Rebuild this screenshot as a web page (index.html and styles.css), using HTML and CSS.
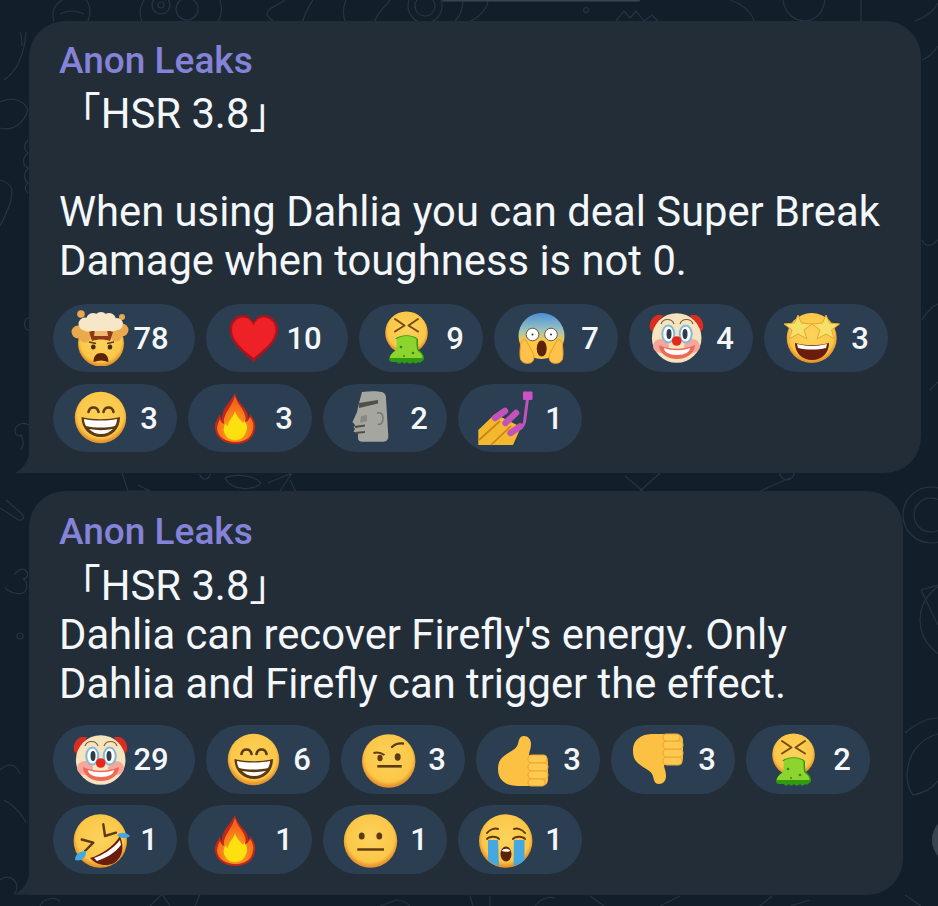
FILE: index.html
```html
<!DOCTYPE html>
<html lang="en">
<head>
    <meta charset="UTF-8">
    <meta name="viewport" content="width=device-width, initial-scale=1.0">
    <title>Anon Leaks</title>
    <link rel="stylesheet" href="styles.css">
</head>
<body>
    <!-- emoji set, every symbol is drawn at 1 unit = 1px in a 60x56 box -->
    <svg class="defs" width="0" height="0">
        <defs>
            <radialGradient id="face" cx="50%" cy="45%" r="52%">
                <stop offset="0" stop-color="#fcd35c"/>
                <stop offset="0.85" stop-color="#fbc748"/>
                <stop offset="1" stop-color="#e8962c"/>
            </radialGradient>
            <linearGradient id="scream" x1="0" y1="0" x2="0" y2="1">
                <stop offset="0" stop-color="#4a90d6"/>
                <stop offset="0.38" stop-color="#9cc4c0"/>
                <stop offset="0.62" stop-color="#fcc843"/>
            </linearGradient>
            <radialGradient id="flame" cx="50%" cy="75%" r="60%">
                <stop offset="0" stop-color="#ffb21c"/>
                <stop offset="1" stop-color="#f4641a"/>
            </radialGradient>

            <symbol id="e-grin" viewBox="0 0 60 56">
                <circle cx="29.5" cy="27.5" r="25.7" fill="url(#face)"/>
                <path d="M17.5 22c1-6 9-6 10 0M32.5 22c1-6 9-6 10 0" fill="none" stroke="#5d3a12" stroke-width="2.6" stroke-linecap="round"/>
                <path d="M10.5 27c12 3 26 3 38.500 0 0 12-8 20-19 20s-19.500-8-19.500-20z" fill="#5d3a12"/>
                <path d="M13 29c10 2 23 2 33 0 0 3-1 5-2 7-9 2-20 2-29 0-1-2-2-4-2-7z" fill="#fff"/>
                <path d="M18 39c8 1.500 16 1.500 24 0-3 3-7 5-12 5s-9-2-12-5z" fill="#fff"/>
            </symbol>
            <symbol id="e-fire" viewBox="0 0 60 56">
                <path d="M29 3c2 9 9 13 12 19 1 2 1 4 1 6 1-1 2-2 2-4 4 5 6 10 5 15-1 9-9 15-19.500 15S10 48 9 39c-1-7 3-10 5-15 0 2 1 4 2 5-1-10 8-16 13-26z" fill="#c4261a"/>
                <path d="M29 6c2 8 8 12 10 19 1 3 1 6-1 8 3-1 5-3 6-6 3 4 4 8 3 12-1 8-8 13-17.500 13S12 47 11 39c0-4 2-8 3-10 1 3 2 4 4 5-2-9 8-17 11-28z" fill="url(#flame)"/>
                <path d="M29 21c1 5 5 8 8 12 1-1 1-2 1-3 3 4 4 8 2 12-2 5-5 8-11 8s-9-3-11-8c-1-3 0-7 2-9 0 2 1 3 2 3 0-6 6-9 7-15z" fill="#fde010"/>
            </symbol>
            <symbol id="e-heart" viewBox="0 0 60 56">
                <path d="M29.500 52C17 41 5.500 32 5.500 19.500 5.500 11 11.500 5 19 5c5 0 8 3 10.500 7 2.500-4 5.500-7 10.500-7 7.500 0 14 6 14 14.500C54 32 42 41 29.500 52z" fill="#a91420"/>
                <path d="M29.500 48C18 38.500 8 31 8 19.500 8 12.500 13 7.500 19 7.500c5 0 8.500 3 10.500 8 2-5 5.500-8 10.500-8 6 0 11.500 5 11.500 12C51.500 31 41 38.500 29.500 48z" fill="#ee2226"/>
            </symbol>
            <symbol id="e-vomit" viewBox="0 0 60 56">
                <circle cx="29.500" cy="22.700" r="21.300" fill="url(#face)"/>
                <path d="M18 9l9.500 6.500-9.500 6M41 9l-9.500 6.500 9.500 6" fill="none" stroke="#7a4a14" stroke-width="2" stroke-linecap="round" stroke-linejoin="round"/>
                <path d="M18 29c5-5 18-5 23 0 0 5 0 9 1 11 3 2 5 5 5 8 0 2-1 3-2 3-1 2-3 2-4 1-2 2-3 2-5 0-2 2-4 2-6 0-2 2-3 2-5 0-2 2-4 2-5 0-2 0-8 1-8-3 0-3 4-7 7-9 2-3 2-6 1-11z" fill="#2f9a12"/>
                <path d="M19.500 29c5-4 15-4 20 0 0 5 0 10 1.500 12 3 2 4.500 4 4.500 7H13c0-3 2-5 5-7 1.500-2 2-7 1.500-12z" fill="#8ed42f"/>
                <circle cx="24" cy="37" r="1.300" fill="#2d8a12"/><circle cx="36" cy="43" r="1.300" fill="#2d8a12"/><circle cx="27" cy="46" r="1" fill="#2d8a12"/>
            </symbol>
            <symbol id="e-scream" viewBox="0 0 60 56">
                <circle cx="29.500" cy="26" r="23" fill="url(#scream)"/>
                <circle cx="20.500" cy="24.500" r="6.300" fill="#fff" stroke="#6b5a42"/><circle cx="39" cy="24.500" r="6.300" fill="#fff" stroke="#6b5a42"/>
                <circle cx="20.500" cy="24.500" r="1" fill="#333"/><circle cx="39" cy="24.500" r="1" fill="#333"/>
                <ellipse cx="29.700" cy="38.500" rx="5" ry="8" fill="#5b2208"/>
                <path d="M9 32c1-3 5-3 6 0l6 11c2 4 1 9-3 10-4 1-8 0-9.500-4-1-4-.5-11 .5-17zM50 32c-1-3-5-3-6 0l-6 11c-2 4-1 9 3 10 4 1 8 0 9.500-4 1-4 .5-11-.5-17z" fill="#fcc24a" stroke="#eb9b2f"/>
            </symbol>
            <symbol id="e-clown" viewBox="0 0 60 56">
                <path d="M10 5C4 8 2 13 3 19l5 6 8-20zM49 5c6 3 8 8 7 14l-5 6-8-20z" fill="#d92d20"/>
                <circle cx="29.700" cy="28" r="24.800" fill="#f6e4bf"/>
                <ellipse cx="14" cy="36" rx="8" ry="7" fill="#f6a79a"/><ellipse cx="45" cy="36" rx="8" ry="7" fill="#f6a79a"/>
                <path d="M14 14c2-6 11-6 13 0M33 14c2-6 11-6 13 0" fill="none" stroke="#7a5c3a" stroke-width="1.200"/>
                <ellipse cx="21.300" cy="24" rx="6" ry="8.500" fill="#fff" stroke="#84b8dc" stroke-width="2"/><ellipse cx="38.700" cy="24" rx="6" ry="8.500" fill="#fff" stroke="#84b8dc" stroke-width="2"/>
                <ellipse cx="22" cy="24" rx="2.500" ry="5" fill="#2c3c4a"/><ellipse cx="38" cy="24" rx="2.500" ry="5" fill="#2c3c4a"/>
                <path d="M12 35c11 5 24 5 36 0 0 8-8 14-18 14s-18-6-18-14z" fill="#ee6a58"/>
                <path d="M17 38c8 3 18 3 26 0 0 4-5 7-13 7s-13-3-13-7z" fill="#fff"/>
                <circle cx="29.700" cy="31" r="4.800" fill="#e8261c"/>
            </symbol>
            <symbol id="e-star" viewBox="0 0 60 56">
                <circle cx="29.700" cy="28" r="25" fill="url(#face)"/>
                <path d="M16 5l3.500 8 10.500 1-8 6 3 9-9-5-9 5 3-9-8-6 10.500-1zM44 5l3.500 8 10 1-8 6 3 9-8.500-5-9 5 3-9-8-6 10.500-1z" fill="#f6e06a" stroke="#e7a72e"/>
                <path d="M13 33c11 3 23 3 34 0 0 10-7 17-17 17s-17-7-17-17z" fill="#6a1c0d"/>
                <path d="M15 34c10 2.500 20 2.500 30 0l-1 4c-9 2-19 2-28 0z" fill="#fff"/>
            </symbol>
            <symbol id="e-moai" viewBox="0 0 60 56">
                <path d="M21 2c8-1 15-1 20 0 3 1 4 3 4 6l2.300 38c0 4-2 5.700-5 5.700H22c-3 0-5-1-5-4v-5l-4.500-1 1.500-3-1.500-1.500L14 35l-2.500-3L16 22l2-9z" fill="#a6a6a1"/>
                <path d="M18 13l19-3v3.500L18 18zM13 36l11-1.500v2L14.500 38zM14 42l10-1v2l-10 1z" fill="#4f4f4a"/>
                <path d="M20 26l6-1v6l-7 2z" fill="#8a8a85"/>
                <path d="M36 23c4-1 6 1 6 5 0 5-2 7-5 6" fill="none" stroke="#777772" stroke-width="1.500"/>
            </symbol>
            <symbol id="e-nail" viewBox="0 0 60 56">
                <path d="M2.300 55V40L19 24l26 13-8 18z" fill="#f3b82d"/>
                <path d="M3 50l21-19M15 55l20-19" stroke="#c9841a" stroke-width="1.700"/>
                <path d="M19 28l10-7M29.500 33l10.500-10M34.500 43l9.500-6.500" fill="none" stroke="#c452bd" stroke-width="6.500" stroke-linecap="round"/>
                <path d="M43 37c2-1 3-2 4-5l3-23h3L50 32c-1 4-3 6-5.500 8z" fill="#c452bd"/>
                <rect x="47" y="1.500" width="9.500" height="8.500" rx="1" fill="#ca52c6"/>
            </symbol>
            <symbol id="e-raised" viewBox="0 0 60 56">
                <circle cx="29.700" cy="29" r="26.700" fill="url(#face)"/>
                <path d="M14.500 21c4-1 8 0 11 2" fill="none" stroke="#5d3a12" stroke-width="2"/>
                <path d="M33 15c3-3 7-4 11-3.500" fill="none" stroke="#5d3a12" stroke-width="2.400" stroke-linecap="round"/>
                <ellipse cx="21" cy="26" rx="2.600" ry="3.200" fill="#5d3a12"/><ellipse cx="38.700" cy="25" rx="3" ry="3.800" fill="#5d3a12"/>
                <rect x="18.300" y="33" width="24.400" height="2.600" fill="#5d3a12"/>
            </symbol>
            <symbol id="e-up" viewBox="0 0 60 56">
                <path d="M30 4c4 0 7 3 7 8 0 5-2 8-2 11h14c3 0 5 3 5 8v16c0 5-3 7-7 7H24c-10 0-20-4-20-17 0-6 2-10 6-13 6-5 12-6 14-12 1-5 2-8 6-8z" fill="#fcc043"/>
                <g fill="#fdc94f" stroke="#f0a535" stroke-width="1.100">
                    <rect x="34" y="23" width="19" height="8" rx="4"/>
                    <rect x="34" y="31" width="20" height="8" rx="4"/>
                    <rect x="34" y="39" width="20" height="8" rx="4"/>
                    <rect x="34" y="47" width="17" height="7" rx="3.500"/>
                </g>
            </symbol>
            <symbol id="e-neutral" viewBox="0 0 60 56">
                <circle cx="29.500" cy="29" r="26.700" fill="url(#face)"/>
                <ellipse cx="20.700" cy="24" rx="2.900" ry="3.600" fill="#5d3a12"/><ellipse cx="38.300" cy="24" rx="2.900" ry="3.600" fill="#5d3a12"/>
                <rect x="16.300" y="36.300" width="26.700" height="2.400" fill="#5d3a12"/>
            </symbol>
            <symbol id="e-sob" viewBox="0 0 60 56">
                <circle cx="29.700" cy="29" r="26.700" fill="url(#face)"/>
                <path d="M11 21c3-4 8-5 11-4M49 21c-3-4-8-5-11-4M11 27c2-3 10-3 12 0M37 27c2-3 10-3 12 0" fill="none" stroke="#5d3a12" stroke-width="2" stroke-linecap="round"/>
                <path d="M12 28h10l1 26c-4-1-8-3-11-6zM38 28h10.500v20c-3 3-6 5-11 6z" fill="#46a8e2"/>
                <ellipse cx="30" cy="42" rx="5.500" ry="7.500" fill="#5b2208"/>
                <path d="M25.500 39c2-3 7-3 9 0-3 1-6 1-9 0z" fill="#fff"/>
            </symbol>
            <symbol id="e-rofl" viewBox="0 0 60 56">
                <circle cx="29.300" cy="29" r="26.700" fill="url(#face)"/>
                <path d="M10.700 27.500l11.600 3.200-8.300 8.300M32.300 12.300L34 24l11-3.300" fill="none" stroke="#5d3a12" stroke-width="2.400" stroke-linecap="round" stroke-linejoin="round"/>
                <path d="M19 46c11-3 23-11 30-22 5 12 2 22-6 27-8 4-18 2-24-5z" fill="#6a1c0d"/>
                <path d="M23 46c9-3 19-9 26-18l1 5c-6 8-15 13-24 16z" fill="#fff"/>
                <path d="M59 24c-3 3-9 3-13-1 3-3 9-3 13 1zM4 48c0-5 4-9 11-9 1 6-5 11-11 9z" fill="#46a8e2"/>
            </symbol>
            <symbol id="e-head" viewBox="0 0 60 56">
                <circle cx="30" cy="33.500" r="23" fill="url(#face)"/>
                <!-- orange puffs behind the cloud -->
                <g fill="#eba94e">
                    <circle cx="7" cy="22" r="6.500"/><circle cx="14" cy="27" r="5.500"/>
                    <circle cx="51" cy="20" r="6.500"/><circle cx="45" cy="26" r="5.500"/>
                    <circle cx="10" cy="4" r="3.800"/><circle cx="51" cy="7" r="3"/>
                </g>
                <path d="M18 22c7-3 17-3 24 0l-3 9c-5-2-13-2-18 0z" fill="#8e3a18"/>
                <path d="M24 19h12l1 7H23z" fill="#f2b86e"/>
                <!-- cream cloud -->
                <g fill="#f8e7c6">
                    <circle cx="14" cy="14" r="6.500"/><circle cx="22" cy="10" r="7"/><circle cx="30" cy="9" r="7"/>
                    <circle cx="38" cy="10" r="7"/><circle cx="46" cy="14" r="6"/><rect x="13" y="12" width="34" height="9" rx="4"/>
                </g>
                <ellipse cx="22.300" cy="37" rx="2.300" ry="2.600" fill="#4a2a0c"/><ellipse cx="39" cy="37" rx="2.300" ry="2.600" fill="#4a2a0c"/>
                <path d="M18 32l7 1.500M43 32l-7 1.500" stroke="#5d3a12" stroke-width="1.500"/>
                <path d="M22.500 52c0-6 3-9 7.500-9s7.500 3 7.500 9c-5-2-10-2-15 0z" fill="#5b2208"/>
            </symbol>
        </defs>
    </svg>

    <!-- wallpaper doodles -->
    <svg class="wallpaper" width="938" height="906" viewBox="0 0 938 906">
        <g fill="none" stroke="#283443" stroke-width="1.200">
            <!-- top strip -->
            <path d="M54 21c-3-8 0-16 8-21M88 21c3-8 2-16-2-21M60 14c8-4 16-4 24 0"/>
            <circle cx="161" cy="5" r="9"/><circle cx="161" cy="5" r="3"/><circle cx="187" cy="9" r="11"/>
            <path d="M142 21c-3-6-2-14 2-21M218 21c4-6 4-14 2-21"/>
            <path d="M285 0c-8 6-18 8-18 14 0 3 4 5 6 7M313 0c-3 5-8 12-10 21"/>
            <path d="M345 21c-3-8-2-14 1-21M375 21c3-10 12-16 15-21"/>
            <circle cx="425" cy="6" r="17"/><circle cx="425" cy="6" r="10"/>
            <path d="M455 21c5-5 8-12 8-21M470 21c12-5 18-15 18-21"/>
            <circle cx="586" cy="10" r="2.500"/>
            <path d="M616 21l8-10 6 7 6-7 8 10 8-6 6 6"/>
            <path d="M730 0c12 4 22 12 24 21M783 0c2 14 12 21 22 21s18-8 20-21M861 0v21M915 21c12-4 20-12 23-18"/>
            <!-- left strip -->
            <path d="M4 80c12-8 20-22 22-48M20 32c2 4 2 8 2 14M0 128c14 4 24-6 28-18-4-10-16-14-28-8"/>
            <path d="M28 140c-5 5-4 10 0 13-6 5-6 12 0 15-5 6-4 12 0 15-4 3-3 8 0 10"/>
            <path d="M0 180c8 2 12 6 12 12 0 10-6 22-12 34M29 318c-6 0-6 12 0 12"/>
            <path d="M29 425c-6-4-14 0-14 6 0 4 4 6 6 4 2 4 4 10 0 14"/>
            <path d="M6 500l16 14c4 4-1 8-5 5L0 508M14 575c3-5 10-8 12-4 4 3 0 8-3 8 4 2 6 10 0 14-6 2-14-1-18-5"/>
            <circle cx="20" cy="636" r="3"/>
            <path d="M0 770c8-8 16-6 20 4M4 800c8 4 16 12 22 22M0 880a8 8 0 0 1 14 14"/>
            <!-- first gap -->
            <path d="M122 473l6 18h22l-12-6M200 474a5 5 0 0 0 10 0M225 478c8-4 28-4 36 5-6 8-30 8-36-5zM268 483l24-10M292 473l-12 18M290 480l6 12"/>
            <path d="M640 491l20-18M625 476l18 15M780 473a7 7 0 0 0 14 0M790 478c-12 5-22 10-30 13"/>
            <!-- right strip -->
            <circle cx="931" cy="515" r="28"/><circle cx="931" cy="515" r="17"/>
            <circle cx="960" cy="620" r="40"/>
            <path d="M921 590l17-5M921 590l17 35"/>
            <path d="M905 733c12-10 24-15 33-15M938 734c-16 4-30 18-31 40 0 8 1 15 6 21 12-2 20-8 25-14"/>
            <path d="M922 240c4 8 10 6 16 0M922 320c6-10 10-14 16-16M930 390l8-8M922 60c8-3 12-8 16-14"/>
            <!-- bottom strip -->
            <path d="M40 906c3-8 16-10 20-4M150 906l12-12 8 12M195 906l5-12M380 906l16-6c6 0 10 2 14 6M470 896l3 10M490 896v10M535 906c4-6 12-10 20-8M590 896l14 10M660 906l20-10M760 906l12-10M790 906l20-6M905 895l16 11"/>
        </g>
        <rect class="peek" x="442" y="0" width="198" height="1.500" rx="0.750"/>
        <circle class="peek" cx="957" cy="840" r="25"/>
    </svg>

    <div class="chat">
        <div class="bubble">
            <div class="name">Anon Leaks</div>
            <div class="text">「HSR 3.8」<br><br>When using Dahlia you can deal Super Break<br>Damage when toughness is not 0.</div>
            <div class="reactions">
                <div class="reaction-row">
                    <div class="reaction wide"><svg class="emoji"><use href="#e-head"/></svg><span class="count">78</span></div>
                    <div class="reaction wide"><svg class="emoji"><use href="#e-heart"/></svg><span class="count">10</span></div>
                    <div class="reaction"><svg class="emoji"><use href="#e-vomit"/></svg><span class="count">9</span></div>
                    <div class="reaction"><svg class="emoji"><use href="#e-scream"/></svg><span class="count">7</span></div>
                    <div class="reaction"><svg class="emoji"><use href="#e-clown"/></svg><span class="count">4</span></div>
                    <div class="reaction"><svg class="emoji"><use href="#e-star"/></svg><span class="count">3</span></div>
                </div>
                <div class="reaction-row">
                    <div class="reaction"><svg class="emoji"><use href="#e-grin"/></svg><span class="count">3</span></div>
                    <div class="reaction"><svg class="emoji"><use href="#e-fire"/></svg><span class="count">3</span></div>
                    <div class="reaction"><svg class="emoji"><use href="#e-moai"/></svg><span class="count">2</span></div>
                    <div class="reaction"><svg class="emoji"><use href="#e-nail"/></svg><span class="count">1</span></div>
                </div>
            </div>
        </div>

        <div class="bubble second">
            <div class="name">Anon Leaks</div>
            <div class="text">「HSR 3.8」<br>Dahlia can recover Firefly's energy. Only<br>Dahlia and Firefly can trigger the effect.</div>
            <div class="reactions">
                <div class="reaction-row">
                    <div class="reaction wide"><svg class="emoji"><use href="#e-clown"/></svg><span class="count">29</span></div>
                    <div class="reaction"><svg class="emoji"><use href="#e-grin"/></svg><span class="count">6</span></div>
                    <div class="reaction"><svg class="emoji"><use href="#e-raised"/></svg><span class="count">3</span></div>
                    <div class="reaction"><svg class="emoji"><use href="#e-up"/></svg><span class="count">3</span></div>
                    <div class="reaction"><svg class="emoji flip"><use href="#e-up"/></svg><span class="count">3</span></div>
                    <div class="reaction"><svg class="emoji"><use href="#e-vomit"/></svg><span class="count">2</span></div>
                </div>
                <div class="reaction-row">
                    <div class="reaction"><svg class="emoji"><use href="#e-rofl"/></svg><span class="count">1</span></div>
                    <div class="reaction"><svg class="emoji"><use href="#e-fire"/></svg><span class="count">1</span></div>
                    <div class="reaction"><svg class="emoji"><use href="#e-neutral"/></svg><span class="count">1</span></div>
                    <div class="reaction"><svg class="emoji"><use href="#e-sob"/></svg><span class="count">1</span></div>
                </div>
            </div>
        </div>
    </div>
</body>
</html>
```

FILE: styles.css
```css
html, body {
    margin: 0;
    height: 100%;
}
body {
    background-color: #131e2b;
    font-family: Roboto, "Noto Sans CJK JP", sans-serif;
    overflow: hidden;
    position: relative;
}
.defs {
    position: absolute;
}
.wallpaper {
    position: absolute;
    top: 0;
    left: 0;
}
.peek {
    fill: #39444f;
}
.chat {
    position: relative;
    display: flex;
    flex-direction: column;
    align-items: flex-start;
    gap: 18px;
    padding: 21px 0 0 29px;
}
.bubble {
    position: relative;
    background: #222d38;
    border-radius: 36px 36px 36px 0;
    padding: 19px 33px 21px 24px;
}
/* tail */
.bubble::before {
    content: "";
    position: absolute;
    left: -15px;
    bottom: 0;
    width: 15px;
    height: 22px;
    background: #222d38;
    clip-path: path("M15 0 C15 10 8 18 0 22 L15 22 Z");
}
.name {
    padding-left: 6px;
    font-size: 37px;
    font-weight: 500;
    line-height: 41px;
    color: #8583d9;
}
.text {
    margin-top: 8px;
    padding-left: 6px;
    font-size: 41.750px;
    line-height: 49px;
    color: #f4f7fa;
}
.reactions {
    display: flex;
    flex-direction: column;
    gap: 11.600px;
    margin-top: 19px;
}
.bubble.second {
    padding-top: 20px;
}
.bubble.second .text {
    margin-top: 8.500px;
}
.bubble.second .reactions {
    margin-top: 17.500px;
}
.reaction-row {
    display: flex;
    gap: 11px;
}
.reaction {
    display: flex;
    align-items: center;
    box-sizing: border-box;
    width: 124px;
    height: 68.400px;
    padding: 0 10px 0 18px;
    background: #2c3e52;
    border-radius: 34.200px;
}
.reaction.wide {
    width: 142px;
    padding-right: 24px;
}
.emoji {
    flex: none;
    width: 60px;
    height: 56px;
}
.emoji.flip {
    transform: scaleY(-1);
}
.count {
    flex: 1;
    text-align: center;
    font-size: 31px;
    font-weight: 500;
    color: #f4f7fa;
}
```
